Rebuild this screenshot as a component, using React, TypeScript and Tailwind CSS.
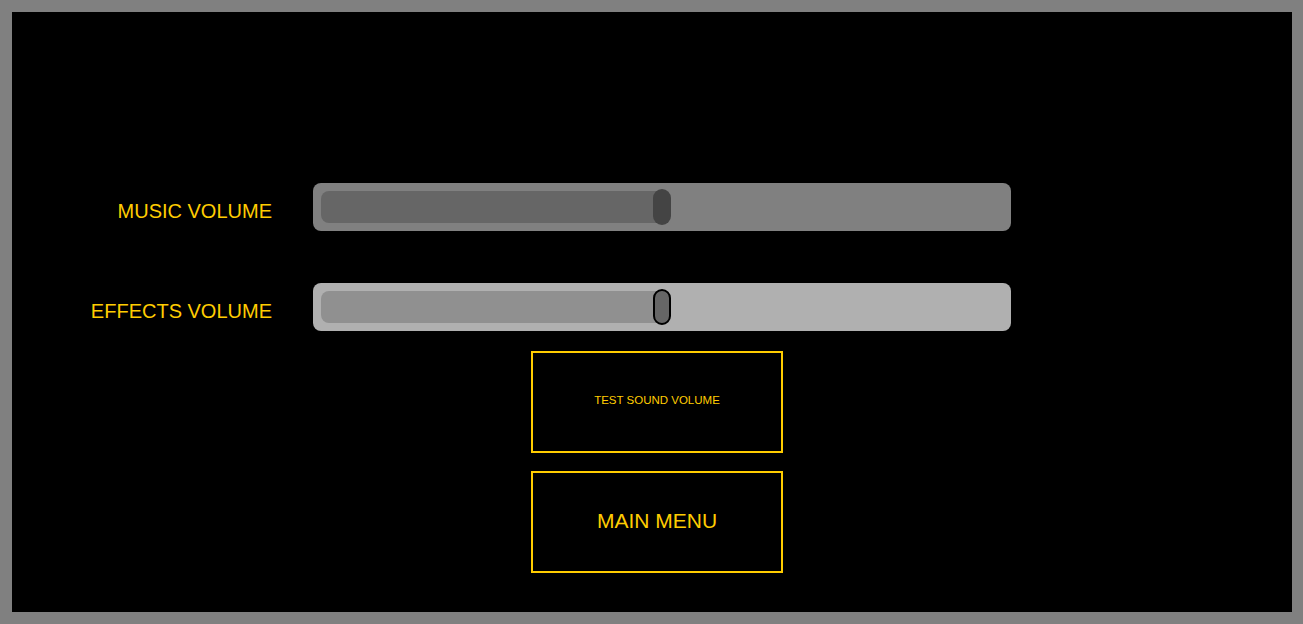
import React from "react";

function Slider({ outer, fill, thumb, thumbBorder }: { outer: string; fill: string; thumb: string; thumbBorder: boolean }) {
  return (
    <div className={`relative w-[698px] h-[48px] rounded-[8px] ${outer}`}>
      <div className={`absolute left-[8px] top-[8px] h-[32px] w-[345px] rounded-[8px] ${fill}`} />
      <div
        className={`absolute left-[340px] top-[6px] w-[18px] h-[36px] rounded-full ${thumb} ${thumbBorder ? "border-2 border-black" : ""}`}
      />
    </div>
  );
}

export default function App() {
  return (
    <div
      className="w-[1303px] h-[624px] bg-black border-t-[12px] border-b-[12px] border-l-[12px] border-r-[11px] border-[#808080] box-border"
      style={{ fontFamily: '"Liberation Sans", Arial, sans-serif' }}
    >
      <div className="flex flex-col pt-[171px]">
        <div className="flex items-center">
          <div className="w-[260px] text-right text-[20px] text-[#ffcc00] pt-[8px] leading-none">MUSIC VOLUME</div>
          <div className="ml-[41px]">
            <Slider outer="bg-[#808080]" fill="bg-[#666666]" thumb="bg-[#444444]" thumbBorder={false} />
          </div>
        </div>
        <div className="flex items-center mt-[52px]">
          <div className="w-[260px] text-right text-[20px] text-[#ffcc00] pt-[8px] leading-none">EFFECTS VOLUME</div>
          <div className="ml-[41px]">
            <Slider outer="bg-[#b0b0b0]" fill="bg-[#909090]" thumb="bg-[#666666]" thumbBorder={true} />
          </div>
        </div>
        <button className="ml-[519px] mt-[20px] w-[252px] h-[102px] border-2 border-[#ffcc00] flex items-center justify-center text-[11.5px] text-[#ffcc00] leading-none pb-[2px]">
          TEST SOUND VOLUME
        </button>
        <button className="ml-[519px] mt-[18px] w-[252px] h-[102px] border-2 border-[#ffcc00] flex items-center justify-center text-[21px] text-[#ffcc00] leading-none pb-[4px]">
          MAIN MENU
        </button>
      </div>
    </div>
  );
}
